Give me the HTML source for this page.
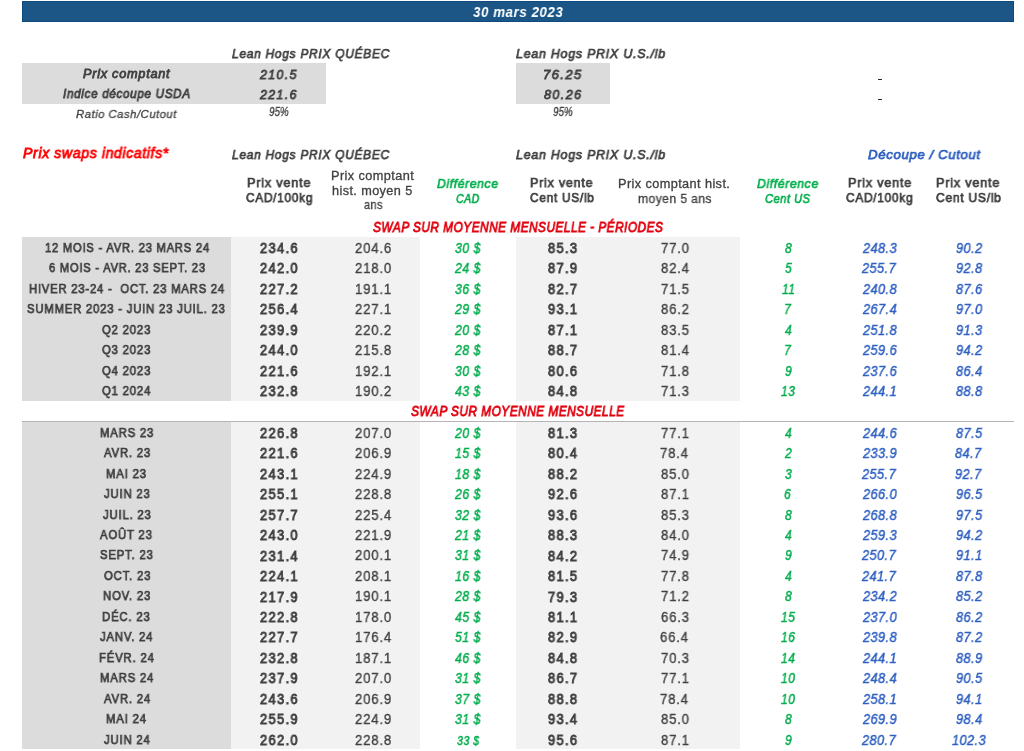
<!DOCTYPE html>
<html><head><meta charset="utf-8"><title>Swaps</title><style>
html,body{margin:0;padding:0;background:#fff;}
body{width:1024px;height:751px;position:relative;overflow:hidden;font-family:'Liberation Sans', sans-serif;}
.r{position:absolute;}
.t{position:absolute;white-space:pre;line-height:40px;transform-origin:0 0;will-change:transform;}
</style></head><body>
<div class="r" style="left:22px;top:1px;width:992px;height:21px;background:#1b5687;box-shadow:inset 0 0 0 1px #0d4a80"></div>
<div class="r" style="left:22px;top:63px;width:304px;height:41px;background:#dcdcdc"></div>
<div class="r" style="left:516px;top:63px;width:94px;height:41px;background:#dcdcdc"></div>
<div class="r" style="left:877.6px;top:78.6px;width:4px;height:1.4px;background:#222"></div>
<div class="r" style="left:877.6px;top:98.9px;width:4px;height:1.4px;background:#222"></div>
<div class="r" style="left:22px;top:237px;width:209px;height:163.6px;background:#dcdcdc"></div>
<div class="r" style="left:231px;top:237px;width:189px;height:163.6px;background:#f2f2f2"></div>
<div class="r" style="left:516px;top:237px;width:224px;height:163.6px;background:#f2f2f2"></div>
<div class="r" style="left:22px;top:421px;width:992px;height:1px;background:#b4b4b4"></div>
<div class="r" style="left:22px;top:422px;width:209px;height:327px;background:#dcdcdc"></div>
<div class="r" style="left:231px;top:422px;width:189px;height:327px;background:#f2f2f2"></div>
<div class="r" style="left:516px;top:422px;width:224px;height:327px;background:#f2f2f2"></div>
<div class="t" style="left:472.61px;top:-8.00px;font-size:15px;font-weight:bold;font-style:italic;letter-spacing:0.6px;color:#ffffff;transform:scaleX(0.8910)">30 mars 2023</div>
<div class="t" style="left:232.30px;top:34.00px;font-size:13.2px;font-weight:normal;font-style:italic;letter-spacing:0.8px;-webkit-text-stroke:0.75px #404040;color:#404040;transform:scaleX(0.9063)">Lean Hogs PRIX QUÉBEC</div>
<div class="t" style="left:516.20px;top:34.00px;font-size:13.2px;font-weight:normal;font-style:italic;letter-spacing:0.8px;-webkit-text-stroke:0.75px #404040;color:#404040;transform:scaleX(0.9418)">Lean Hogs PRIX U.S./lb</div>
<div class="t" style="left:83.00px;top:54.06px;font-size:12.4px;font-weight:normal;font-style:italic;letter-spacing:0.7px;-webkit-text-stroke:0.8px #404040;color:#404040;transform:scaleX(1.0294)">Prix comptant</div>
<div class="t" style="left:63.40px;top:74.30px;font-size:12.4px;font-weight:normal;font-style:italic;letter-spacing:0.7px;-webkit-text-stroke:0.8px #404040;color:#404040;transform:scaleX(0.9448)">Indice découpe USDA</div>
<div class="t" style="left:76.30px;top:93.80px;font-size:11.5px;font-weight:normal;font-style:italic;letter-spacing:0.5px;-webkit-text-stroke:0.3px #404040;color:#404040;transform:scaleX(0.9843)">Ratio Cash/Cutout</div>
<div class="t" style="left:260.20px;top:54.60px;font-size:13.3px;font-weight:normal;font-style:italic;letter-spacing:1.4px;-webkit-text-stroke:0.8px #404040;color:#404040;transform:scaleX(0.9359)">210.5</div>
<div class="t" style="left:260.20px;top:75.00px;font-size:13.3px;font-weight:normal;font-style:italic;letter-spacing:1.4px;-webkit-text-stroke:0.8px #404040;color:#404040;transform:scaleX(0.9359)">221.6</div>
<div class="t" style="left:269.20px;top:92.00px;font-size:12px;font-weight:normal;font-style:italic;-webkit-text-stroke:0.3px #404040;color:#404040;transform:scaleX(0.8208)">95%</div>
<div class="t" style="left:542.92px;top:54.70px;font-size:13.3px;font-weight:normal;font-style:italic;letter-spacing:1.4px;-webkit-text-stroke:0.8px #404040;color:#404040;transform:scaleX(0.9816)">76.25</div>
<div class="t" style="left:543.60px;top:74.90px;font-size:13.3px;font-weight:normal;font-style:italic;letter-spacing:1.4px;-webkit-text-stroke:0.8px #404040;color:#404040;transform:scaleX(0.9538)">80.26</div>
<div class="t" style="left:552.70px;top:91.90px;font-size:12px;font-weight:normal;font-style:italic;-webkit-text-stroke:0.3px #404040;color:#404040;transform:scaleX(0.8208)">95%</div>
<div class="t" style="left:23.20px;top:132.90px;font-size:14.2px;font-weight:normal;font-style:italic;letter-spacing:0.6px;-webkit-text-stroke:0.8px #ff0000;color:#ff0000;transform:scaleX(0.9959)">Prix swaps indicatifs*</div>
<div class="t" style="left:232.40px;top:134.90px;font-size:13.2px;font-weight:normal;font-style:italic;letter-spacing:0.8px;-webkit-text-stroke:0.75px #404040;color:#404040;transform:scaleX(0.9057)">Lean Hogs PRIX QUÉBEC</div>
<div class="t" style="left:516.20px;top:134.90px;font-size:13.2px;font-weight:normal;font-style:italic;letter-spacing:0.8px;-webkit-text-stroke:0.75px #404040;color:#404040;transform:scaleX(0.9418)">Lean Hogs PRIX U.S./lb</div>
<div class="t" style="left:868.00px;top:134.60px;font-size:13.3px;font-weight:normal;font-style:italic;letter-spacing:0.6px;-webkit-text-stroke:0.75px #2e5fc1;color:#2e5fc1;transform:scaleX(0.9965)">Découpe / Cutout</div>
<div class="t" style="left:246.52px;top:162.90px;font-size:13px;font-weight:normal;font-style:normal;letter-spacing:0.8px;-webkit-text-stroke:0.75px #404040;color:#404040;transform:scaleX(0.9766)">Prix vente</div>
<div class="t" style="left:245.50px;top:177.50px;font-size:13px;font-weight:normal;font-style:normal;letter-spacing:0.8px;-webkit-text-stroke:0.75px #404040;color:#404040;transform:scaleX(0.9110)">CAD/100kg</div>
<div class="t" style="left:330.98px;top:156.00px;font-size:12.5px;font-weight:normal;font-style:normal;letter-spacing:0.4px;-webkit-text-stroke:0.3px #404040;color:#404040;transform:scaleX(1.0188)">Prix comptant</div>
<div class="t" style="left:332.39px;top:171.00px;font-size:12.5px;font-weight:normal;font-style:normal;letter-spacing:0.4px;-webkit-text-stroke:0.3px #404040;color:#404040;transform:scaleX(1.0141)">hist. moyen 5</div>
<div class="t" style="left:363.70px;top:185.30px;font-size:12.5px;font-weight:normal;font-style:normal;letter-spacing:0.4px;-webkit-text-stroke:0.3px #404040;color:#404040;transform:scaleX(0.8810)">ans</div>
<div class="t" style="left:437.20px;top:163.90px;font-size:13px;font-weight:normal;font-style:italic;letter-spacing:0.6px;-webkit-text-stroke:0.65px #00ad4c;color:#00ad4c;transform:scaleX(0.9431)">Différence</div>
<div class="t" style="left:456.10px;top:178.50px;font-size:13px;font-weight:normal;font-style:italic;letter-spacing:0.6px;-webkit-text-stroke:0.65px #00ad4c;color:#00ad4c;transform:scaleX(0.8103)">CAD</div>
<div class="t" style="left:530.34px;top:162.90px;font-size:13px;font-weight:normal;font-style:normal;letter-spacing:0.8px;-webkit-text-stroke:0.75px #404040;color:#404040;transform:scaleX(0.9625)">Prix vente</div>
<div class="t" style="left:530.40px;top:177.50px;font-size:13px;font-weight:normal;font-style:normal;letter-spacing:0.8px;-webkit-text-stroke:0.75px #404040;color:#404040;transform:scaleX(0.9114)">Cent US/lb</div>
<div class="t" style="left:618.48px;top:163.90px;font-size:12.5px;font-weight:normal;font-style:normal;letter-spacing:0.4px;-webkit-text-stroke:0.3px #404040;color:#404040;transform:scaleX(1.0167)">Prix comptant hist.</div>
<div class="t" style="left:638.03px;top:178.50px;font-size:12.5px;font-weight:normal;font-style:normal;letter-spacing:0.4px;-webkit-text-stroke:0.3px #404040;color:#404040;transform:scaleX(0.9730)">moyen 5 ans</div>
<div class="t" style="left:757.00px;top:163.90px;font-size:13px;font-weight:normal;font-style:italic;letter-spacing:0.6px;-webkit-text-stroke:0.65px #00ad4c;color:#00ad4c;transform:scaleX(0.9462)">Différence</div>
<div class="t" style="left:765.20px;top:178.50px;font-size:13px;font-weight:normal;font-style:italic;letter-spacing:0.6px;-webkit-text-stroke:0.65px #00ad4c;color:#00ad4c;transform:scaleX(0.8547)">Cent US</div>
<div class="t" style="left:847.63px;top:162.90px;font-size:13px;font-weight:normal;font-style:normal;letter-spacing:0.8px;-webkit-text-stroke:0.75px #404040;color:#404040;transform:scaleX(0.9734)">Prix vente</div>
<div class="t" style="left:846.10px;top:177.50px;font-size:13px;font-weight:normal;font-style:normal;letter-spacing:0.8px;-webkit-text-stroke:0.75px #404040;color:#404040;transform:scaleX(0.9137)">CAD/100kg</div>
<div class="t" style="left:936.42px;top:162.90px;font-size:13px;font-weight:normal;font-style:normal;letter-spacing:0.8px;-webkit-text-stroke:0.75px #404040;color:#404040;transform:scaleX(0.9750)">Prix vente</div>
<div class="t" style="left:936.30px;top:177.50px;font-size:13px;font-weight:normal;font-style:normal;letter-spacing:0.8px;-webkit-text-stroke:0.75px #404040;color:#404040;transform:scaleX(0.9257)">Cent US/lb</div>
<div class="t" style="left:373.20px;top:206.60px;font-size:14px;font-weight:normal;font-style:italic;letter-spacing:0.5px;-webkit-text-stroke:0.8px #e0000f;color:#e0000f;transform:scaleX(0.8524)">SWAP SUR MOYENNE MENSUELLE - PÉRIODES</div>
<div class="t" style="left:411.25px;top:390.90px;font-size:14px;font-weight:normal;font-style:italic;letter-spacing:0.5px;-webkit-text-stroke:0.8px #e0000f;color:#e0000f;transform:scaleX(0.8530)">SWAP SUR MOYENNE MENSUELLE</div>
<div class="t" style="left:44.73px;top:227.80px;font-size:12.8px;font-weight:normal;font-style:normal;letter-spacing:0.9px;-webkit-text-stroke:0.75px #404040;color:#404040;transform:scaleX(0.8738)">12 MOIS - AVR. 23 MARS 24</div>
<div class="t" style="left:259.71px;top:227.90px;font-size:13.9px;font-weight:normal;font-style:normal;letter-spacing:1.5px;-webkit-text-stroke:0.9px #404040;color:#404040;transform:scaleX(0.9214)">234.6</div>
<div class="t" style="left:354.55px;top:227.80px;font-size:13.9px;font-weight:normal;font-style:normal;letter-spacing:0.9px;-webkit-text-stroke:0.35px #404040;color:#404040;transform:scaleX(0.9412)">204.6</div>
<div class="t" style="left:455.10px;top:227.80px;font-size:14px;font-weight:normal;font-style:italic;letter-spacing:0.5px;-webkit-text-stroke:0.45px #00ad4c;color:#00ad4c;transform:scaleX(0.8828)">30 $</div>
<div class="t" style="left:548.02px;top:227.90px;font-size:13.9px;font-weight:normal;font-style:normal;letter-spacing:1.5px;-webkit-text-stroke:0.9px #404040;color:#404040;transform:scaleX(0.9214)">85.3</div>
<div class="t" style="left:660.88px;top:227.80px;font-size:13.9px;font-weight:normal;font-style:normal;letter-spacing:0.9px;-webkit-text-stroke:0.35px #404040;color:#404040;transform:scaleX(0.9412)">77.0</div>
<div class="t" style="left:784.54px;top:227.80px;font-size:14px;font-weight:normal;font-style:italic;letter-spacing:0.5px;-webkit-text-stroke:0.45px #00ad4c;color:#00ad4c;transform:scaleX(0.8652)">8</div>
<div class="t" style="left:862.68px;top:227.80px;font-size:14px;font-weight:normal;font-style:italic;letter-spacing:0.5px;-webkit-text-stroke:0.45px #2e5fc1;color:#2e5fc1;transform:scaleX(0.9091)">248.3</div>
<div class="t" style="left:955.62px;top:227.80px;font-size:14px;font-weight:normal;font-style:italic;letter-spacing:0.5px;-webkit-text-stroke:0.45px #2e5fc1;color:#2e5fc1;transform:scaleX(0.9091)">90.2</div>
<div class="t" style="left:49.00px;top:248.27px;font-size:12.8px;font-weight:normal;font-style:normal;letter-spacing:0.9px;-webkit-text-stroke:0.75px #404040;color:#404040;transform:scaleX(0.8704)">6 MOIS - AVR. 23 SEPT. 23</div>
<div class="t" style="left:259.71px;top:248.37px;font-size:13.9px;font-weight:normal;font-style:normal;letter-spacing:1.5px;-webkit-text-stroke:0.9px #404040;color:#404040;transform:scaleX(0.9214)">242.0</div>
<div class="t" style="left:354.55px;top:248.27px;font-size:13.9px;font-weight:normal;font-style:normal;letter-spacing:0.9px;-webkit-text-stroke:0.35px #404040;color:#404040;transform:scaleX(0.9412)">218.0</div>
<div class="t" style="left:455.10px;top:248.27px;font-size:14px;font-weight:normal;font-style:italic;letter-spacing:0.5px;-webkit-text-stroke:0.45px #00ad4c;color:#00ad4c;transform:scaleX(0.8828)">24 $</div>
<div class="t" style="left:548.02px;top:248.37px;font-size:13.9px;font-weight:normal;font-style:normal;letter-spacing:1.5px;-webkit-text-stroke:0.9px #404040;color:#404040;transform:scaleX(0.9214)">87.9</div>
<div class="t" style="left:660.88px;top:248.27px;font-size:13.9px;font-weight:normal;font-style:normal;letter-spacing:0.9px;-webkit-text-stroke:0.35px #404040;color:#404040;transform:scaleX(0.9412)">82.4</div>
<div class="t" style="left:784.54px;top:248.27px;font-size:14px;font-weight:normal;font-style:italic;letter-spacing:0.5px;-webkit-text-stroke:0.45px #00ad4c;color:#00ad4c;transform:scaleX(0.8652)">5</div>
<div class="t" style="left:862.23px;top:248.27px;font-size:14px;font-weight:normal;font-style:italic;letter-spacing:0.5px;-webkit-text-stroke:0.45px #2e5fc1;color:#2e5fc1;transform:scaleX(0.9091)">255.7</div>
<div class="t" style="left:955.62px;top:248.27px;font-size:14px;font-weight:normal;font-style:italic;letter-spacing:0.5px;-webkit-text-stroke:0.45px #2e5fc1;color:#2e5fc1;transform:scaleX(0.9091)">92.8</div>
<div class="t" style="left:28.52px;top:268.74px;font-size:12.8px;font-weight:normal;font-style:normal;letter-spacing:0.9px;-webkit-text-stroke:0.75px #404040;color:#404040;transform:scaleX(0.8805)">HIVER 23-24 -  OCT. 23 MARS 24</div>
<div class="t" style="left:259.71px;top:268.84px;font-size:13.9px;font-weight:normal;font-style:normal;letter-spacing:1.5px;-webkit-text-stroke:0.9px #404040;color:#404040;transform:scaleX(0.9214)">227.2</div>
<div class="t" style="left:354.55px;top:268.74px;font-size:13.9px;font-weight:normal;font-style:normal;letter-spacing:0.9px;-webkit-text-stroke:0.35px #404040;color:#404040;transform:scaleX(0.9412)">191.1</div>
<div class="t" style="left:455.10px;top:268.74px;font-size:14px;font-weight:normal;font-style:italic;letter-spacing:0.5px;-webkit-text-stroke:0.45px #00ad4c;color:#00ad4c;transform:scaleX(0.8828)">36 $</div>
<div class="t" style="left:548.02px;top:268.84px;font-size:13.9px;font-weight:normal;font-style:normal;letter-spacing:1.5px;-webkit-text-stroke:0.9px #404040;color:#404040;transform:scaleX(0.9214)">82.7</div>
<div class="t" style="left:660.88px;top:268.74px;font-size:13.9px;font-weight:normal;font-style:normal;letter-spacing:0.9px;-webkit-text-stroke:0.35px #404040;color:#404040;transform:scaleX(0.9412)">71.5</div>
<div class="t" style="left:781.94px;top:268.74px;font-size:14px;font-weight:normal;font-style:italic;letter-spacing:0.5px;-webkit-text-stroke:0.45px #00ad4c;color:#00ad4c;transform:scaleX(0.8652)">11</div>
<div class="t" style="left:862.68px;top:268.74px;font-size:14px;font-weight:normal;font-style:italic;letter-spacing:0.5px;-webkit-text-stroke:0.45px #2e5fc1;color:#2e5fc1;transform:scaleX(0.9091)">240.8</div>
<div class="t" style="left:955.62px;top:268.74px;font-size:14px;font-weight:normal;font-style:italic;letter-spacing:0.5px;-webkit-text-stroke:0.45px #2e5fc1;color:#2e5fc1;transform:scaleX(0.9091)">87.6</div>
<div class="t" style="left:27.30px;top:289.21px;font-size:12.8px;font-weight:normal;font-style:normal;letter-spacing:0.9px;-webkit-text-stroke:0.75px #404040;color:#404040;transform:scaleX(0.8839)">SUMMER 2023 - JUIN 23 JUIL. 23</div>
<div class="t" style="left:259.71px;top:289.31px;font-size:13.9px;font-weight:normal;font-style:normal;letter-spacing:1.5px;-webkit-text-stroke:0.9px #404040;color:#404040;transform:scaleX(0.9214)">256.4</div>
<div class="t" style="left:354.55px;top:289.21px;font-size:13.9px;font-weight:normal;font-style:normal;letter-spacing:0.9px;-webkit-text-stroke:0.35px #404040;color:#404040;transform:scaleX(0.9412)">227.1</div>
<div class="t" style="left:455.10px;top:289.21px;font-size:14px;font-weight:normal;font-style:italic;letter-spacing:0.5px;-webkit-text-stroke:0.45px #00ad4c;color:#00ad4c;transform:scaleX(0.8828)">29 $</div>
<div class="t" style="left:548.02px;top:289.31px;font-size:13.9px;font-weight:normal;font-style:normal;letter-spacing:1.5px;-webkit-text-stroke:0.9px #404040;color:#404040;transform:scaleX(0.9214)">93.1</div>
<div class="t" style="left:661.35px;top:289.21px;font-size:13.9px;font-weight:normal;font-style:normal;letter-spacing:0.9px;-webkit-text-stroke:0.35px #404040;color:#404040;transform:scaleX(0.9412)">86.2</div>
<div class="t" style="left:783.67px;top:289.21px;font-size:14px;font-weight:normal;font-style:italic;letter-spacing:0.5px;-webkit-text-stroke:0.45px #00ad4c;color:#00ad4c;transform:scaleX(0.8652)">7</div>
<div class="t" style="left:862.68px;top:289.21px;font-size:14px;font-weight:normal;font-style:italic;letter-spacing:0.5px;-webkit-text-stroke:0.45px #2e5fc1;color:#2e5fc1;transform:scaleX(0.9091)">267.4</div>
<div class="t" style="left:955.62px;top:289.21px;font-size:14px;font-weight:normal;font-style:italic;letter-spacing:0.5px;-webkit-text-stroke:0.45px #2e5fc1;color:#2e5fc1;transform:scaleX(0.9091)">97.0</div>
<div class="t" style="left:102.21px;top:309.68px;font-size:12.8px;font-weight:normal;font-style:normal;letter-spacing:0.9px;-webkit-text-stroke:0.75px #404040;color:#404040;transform:scaleX(0.8869)">Q2 2023</div>
<div class="t" style="left:259.71px;top:309.78px;font-size:13.9px;font-weight:normal;font-style:normal;letter-spacing:1.5px;-webkit-text-stroke:0.9px #404040;color:#404040;transform:scaleX(0.9214)">239.9</div>
<div class="t" style="left:354.55px;top:309.68px;font-size:13.9px;font-weight:normal;font-style:normal;letter-spacing:0.9px;-webkit-text-stroke:0.35px #404040;color:#404040;transform:scaleX(0.9412)">220.2</div>
<div class="t" style="left:455.10px;top:309.68px;font-size:14px;font-weight:normal;font-style:italic;letter-spacing:0.5px;-webkit-text-stroke:0.45px #00ad4c;color:#00ad4c;transform:scaleX(0.8828)">20 $</div>
<div class="t" style="left:548.02px;top:309.78px;font-size:13.9px;font-weight:normal;font-style:normal;letter-spacing:1.5px;-webkit-text-stroke:0.9px #404040;color:#404040;transform:scaleX(0.9214)">87.1</div>
<div class="t" style="left:661.35px;top:309.68px;font-size:13.9px;font-weight:normal;font-style:normal;letter-spacing:0.9px;-webkit-text-stroke:0.35px #404040;color:#404040;transform:scaleX(0.9412)">83.5</div>
<div class="t" style="left:784.54px;top:309.68px;font-size:14px;font-weight:normal;font-style:italic;letter-spacing:0.5px;-webkit-text-stroke:0.45px #00ad4c;color:#00ad4c;transform:scaleX(0.8652)">4</div>
<div class="t" style="left:862.68px;top:309.68px;font-size:14px;font-weight:normal;font-style:italic;letter-spacing:0.5px;-webkit-text-stroke:0.45px #2e5fc1;color:#2e5fc1;transform:scaleX(0.9091)">251.8</div>
<div class="t" style="left:955.62px;top:309.68px;font-size:14px;font-weight:normal;font-style:italic;letter-spacing:0.5px;-webkit-text-stroke:0.45px #2e5fc1;color:#2e5fc1;transform:scaleX(0.9091)">91.3</div>
<div class="t" style="left:102.21px;top:330.15px;font-size:12.8px;font-weight:normal;font-style:normal;letter-spacing:0.9px;-webkit-text-stroke:0.75px #404040;color:#404040;transform:scaleX(0.8869)">Q3 2023</div>
<div class="t" style="left:259.71px;top:330.25px;font-size:13.9px;font-weight:normal;font-style:normal;letter-spacing:1.5px;-webkit-text-stroke:0.9px #404040;color:#404040;transform:scaleX(0.9214)">244.0</div>
<div class="t" style="left:354.55px;top:330.15px;font-size:13.9px;font-weight:normal;font-style:normal;letter-spacing:0.9px;-webkit-text-stroke:0.35px #404040;color:#404040;transform:scaleX(0.9412)">215.8</div>
<div class="t" style="left:455.10px;top:330.15px;font-size:14px;font-weight:normal;font-style:italic;letter-spacing:0.5px;-webkit-text-stroke:0.45px #00ad4c;color:#00ad4c;transform:scaleX(0.8828)">28 $</div>
<div class="t" style="left:548.02px;top:330.25px;font-size:13.9px;font-weight:normal;font-style:normal;letter-spacing:1.5px;-webkit-text-stroke:0.9px #404040;color:#404040;transform:scaleX(0.9214)">88.7</div>
<div class="t" style="left:660.88px;top:330.15px;font-size:13.9px;font-weight:normal;font-style:normal;letter-spacing:0.9px;-webkit-text-stroke:0.35px #404040;color:#404040;transform:scaleX(0.9412)">81.4</div>
<div class="t" style="left:783.67px;top:330.15px;font-size:14px;font-weight:normal;font-style:italic;letter-spacing:0.5px;-webkit-text-stroke:0.45px #00ad4c;color:#00ad4c;transform:scaleX(0.8652)">7</div>
<div class="t" style="left:862.68px;top:330.15px;font-size:14px;font-weight:normal;font-style:italic;letter-spacing:0.5px;-webkit-text-stroke:0.45px #2e5fc1;color:#2e5fc1;transform:scaleX(0.9091)">259.6</div>
<div class="t" style="left:955.62px;top:330.15px;font-size:14px;font-weight:normal;font-style:italic;letter-spacing:0.5px;-webkit-text-stroke:0.45px #2e5fc1;color:#2e5fc1;transform:scaleX(0.9091)">94.2</div>
<div class="t" style="left:102.21px;top:350.62px;font-size:12.8px;font-weight:normal;font-style:normal;letter-spacing:0.9px;-webkit-text-stroke:0.75px #404040;color:#404040;transform:scaleX(0.8869)">Q4 2023</div>
<div class="t" style="left:259.71px;top:350.72px;font-size:13.9px;font-weight:normal;font-style:normal;letter-spacing:1.5px;-webkit-text-stroke:0.9px #404040;color:#404040;transform:scaleX(0.9214)">221.6</div>
<div class="t" style="left:354.55px;top:350.62px;font-size:13.9px;font-weight:normal;font-style:normal;letter-spacing:0.9px;-webkit-text-stroke:0.35px #404040;color:#404040;transform:scaleX(0.9412)">192.1</div>
<div class="t" style="left:455.10px;top:350.62px;font-size:14px;font-weight:normal;font-style:italic;letter-spacing:0.5px;-webkit-text-stroke:0.45px #00ad4c;color:#00ad4c;transform:scaleX(0.8828)">30 $</div>
<div class="t" style="left:548.02px;top:350.72px;font-size:13.9px;font-weight:normal;font-style:normal;letter-spacing:1.5px;-webkit-text-stroke:0.9px #404040;color:#404040;transform:scaleX(0.9214)">80.6</div>
<div class="t" style="left:660.88px;top:350.62px;font-size:13.9px;font-weight:normal;font-style:normal;letter-spacing:0.9px;-webkit-text-stroke:0.35px #404040;color:#404040;transform:scaleX(0.9412)">71.8</div>
<div class="t" style="left:784.54px;top:350.62px;font-size:14px;font-weight:normal;font-style:italic;letter-spacing:0.5px;-webkit-text-stroke:0.45px #00ad4c;color:#00ad4c;transform:scaleX(0.8652)">9</div>
<div class="t" style="left:862.68px;top:350.62px;font-size:14px;font-weight:normal;font-style:italic;letter-spacing:0.5px;-webkit-text-stroke:0.45px #2e5fc1;color:#2e5fc1;transform:scaleX(0.9091)">237.6</div>
<div class="t" style="left:955.62px;top:350.62px;font-size:14px;font-weight:normal;font-style:italic;letter-spacing:0.5px;-webkit-text-stroke:0.45px #2e5fc1;color:#2e5fc1;transform:scaleX(0.9091)">86.4</div>
<div class="t" style="left:102.21px;top:371.09px;font-size:12.8px;font-weight:normal;font-style:normal;letter-spacing:0.9px;-webkit-text-stroke:0.75px #404040;color:#404040;transform:scaleX(0.8869)">Q1 2024</div>
<div class="t" style="left:259.71px;top:371.19px;font-size:13.9px;font-weight:normal;font-style:normal;letter-spacing:1.5px;-webkit-text-stroke:0.9px #404040;color:#404040;transform:scaleX(0.9214)">232.8</div>
<div class="t" style="left:354.55px;top:371.09px;font-size:13.9px;font-weight:normal;font-style:normal;letter-spacing:0.9px;-webkit-text-stroke:0.35px #404040;color:#404040;transform:scaleX(0.9412)">190.2</div>
<div class="t" style="left:455.10px;top:371.09px;font-size:14px;font-weight:normal;font-style:italic;letter-spacing:0.5px;-webkit-text-stroke:0.45px #00ad4c;color:#00ad4c;transform:scaleX(0.8828)">43 $</div>
<div class="t" style="left:548.02px;top:371.19px;font-size:13.9px;font-weight:normal;font-style:normal;letter-spacing:1.5px;-webkit-text-stroke:0.9px #404040;color:#404040;transform:scaleX(0.9214)">84.8</div>
<div class="t" style="left:660.88px;top:371.09px;font-size:13.9px;font-weight:normal;font-style:normal;letter-spacing:0.9px;-webkit-text-stroke:0.35px #404040;color:#404040;transform:scaleX(0.9412)">71.3</div>
<div class="t" style="left:781.08px;top:371.09px;font-size:14px;font-weight:normal;font-style:italic;letter-spacing:0.5px;-webkit-text-stroke:0.45px #00ad4c;color:#00ad4c;transform:scaleX(0.8652)">13</div>
<div class="t" style="left:863.14px;top:371.09px;font-size:14px;font-weight:normal;font-style:italic;letter-spacing:0.5px;-webkit-text-stroke:0.45px #2e5fc1;color:#2e5fc1;transform:scaleX(0.9091)">244.1</div>
<div class="t" style="left:955.62px;top:371.09px;font-size:14px;font-weight:normal;font-style:italic;letter-spacing:0.5px;-webkit-text-stroke:0.45px #2e5fc1;color:#2e5fc1;transform:scaleX(0.9091)">88.8</div>
<div class="t" style="left:99.55px;top:412.65px;font-size:12.8px;font-weight:normal;font-style:normal;letter-spacing:0.9px;-webkit-text-stroke:0.75px #404040;color:#404040;transform:scaleX(0.8869)">MARS 23</div>
<div class="t" style="left:259.71px;top:412.75px;font-size:13.9px;font-weight:normal;font-style:normal;letter-spacing:1.5px;-webkit-text-stroke:0.9px #404040;color:#404040;transform:scaleX(0.9214)">226.8</div>
<div class="t" style="left:354.55px;top:412.65px;font-size:13.9px;font-weight:normal;font-style:normal;letter-spacing:0.9px;-webkit-text-stroke:0.35px #404040;color:#404040;transform:scaleX(0.9412)">207.0</div>
<div class="t" style="left:455.10px;top:412.65px;font-size:14px;font-weight:normal;font-style:italic;letter-spacing:0.5px;-webkit-text-stroke:0.45px #00ad4c;color:#00ad4c;transform:scaleX(0.8828)">20 $</div>
<div class="t" style="left:548.02px;top:412.75px;font-size:13.9px;font-weight:normal;font-style:normal;letter-spacing:1.5px;-webkit-text-stroke:0.9px #404040;color:#404040;transform:scaleX(0.9214)">81.3</div>
<div class="t" style="left:660.88px;top:412.65px;font-size:13.9px;font-weight:normal;font-style:normal;letter-spacing:0.9px;-webkit-text-stroke:0.35px #404040;color:#404040;transform:scaleX(0.9412)">77.1</div>
<div class="t" style="left:784.54px;top:412.65px;font-size:14px;font-weight:normal;font-style:italic;letter-spacing:0.5px;-webkit-text-stroke:0.45px #00ad4c;color:#00ad4c;transform:scaleX(0.8652)">4</div>
<div class="t" style="left:862.68px;top:412.65px;font-size:14px;font-weight:normal;font-style:italic;letter-spacing:0.5px;-webkit-text-stroke:0.45px #2e5fc1;color:#2e5fc1;transform:scaleX(0.9091)">244.6</div>
<div class="t" style="left:955.62px;top:412.65px;font-size:14px;font-weight:normal;font-style:italic;letter-spacing:0.5px;-webkit-text-stroke:0.45px #2e5fc1;color:#2e5fc1;transform:scaleX(0.9091)">87.5</div>
<div class="t" style="left:103.54px;top:433.12px;font-size:12.8px;font-weight:normal;font-style:normal;letter-spacing:0.9px;-webkit-text-stroke:0.75px #404040;color:#404040;transform:scaleX(0.8869)">AVR. 23</div>
<div class="t" style="left:259.71px;top:433.22px;font-size:13.9px;font-weight:normal;font-style:normal;letter-spacing:1.5px;-webkit-text-stroke:0.9px #404040;color:#404040;transform:scaleX(0.9214)">221.6</div>
<div class="t" style="left:354.55px;top:433.12px;font-size:13.9px;font-weight:normal;font-style:normal;letter-spacing:0.9px;-webkit-text-stroke:0.35px #404040;color:#404040;transform:scaleX(0.9412)">206.9</div>
<div class="t" style="left:455.10px;top:433.12px;font-size:14px;font-weight:normal;font-style:italic;letter-spacing:0.5px;-webkit-text-stroke:0.45px #00ad4c;color:#00ad4c;transform:scaleX(0.8828)">15 $</div>
<div class="t" style="left:547.56px;top:433.22px;font-size:13.9px;font-weight:normal;font-style:normal;letter-spacing:1.5px;-webkit-text-stroke:0.9px #404040;color:#404040;transform:scaleX(0.9214)">80.4</div>
<div class="t" style="left:660.41px;top:433.12px;font-size:13.9px;font-weight:normal;font-style:normal;letter-spacing:0.9px;-webkit-text-stroke:0.35px #404040;color:#404040;transform:scaleX(0.9412)">78.4</div>
<div class="t" style="left:784.54px;top:433.12px;font-size:14px;font-weight:normal;font-style:italic;letter-spacing:0.5px;-webkit-text-stroke:0.45px #00ad4c;color:#00ad4c;transform:scaleX(0.8652)">2</div>
<div class="t" style="left:862.68px;top:433.12px;font-size:14px;font-weight:normal;font-style:italic;letter-spacing:0.5px;-webkit-text-stroke:0.45px #2e5fc1;color:#2e5fc1;transform:scaleX(0.9091)">233.9</div>
<div class="t" style="left:955.16px;top:433.12px;font-size:14px;font-weight:normal;font-style:italic;letter-spacing:0.5px;-webkit-text-stroke:0.45px #2e5fc1;color:#2e5fc1;transform:scaleX(0.9091)">84.7</div>
<div class="t" style="left:106.20px;top:453.59px;font-size:12.8px;font-weight:normal;font-style:normal;letter-spacing:0.9px;-webkit-text-stroke:0.75px #404040;color:#404040;transform:scaleX(0.8869)">MAI 23</div>
<div class="t" style="left:259.71px;top:453.69px;font-size:13.9px;font-weight:normal;font-style:normal;letter-spacing:1.5px;-webkit-text-stroke:0.9px #404040;color:#404040;transform:scaleX(0.9214)">243.1</div>
<div class="t" style="left:354.55px;top:453.59px;font-size:13.9px;font-weight:normal;font-style:normal;letter-spacing:0.9px;-webkit-text-stroke:0.35px #404040;color:#404040;transform:scaleX(0.9412)">224.9</div>
<div class="t" style="left:455.10px;top:453.59px;font-size:14px;font-weight:normal;font-style:italic;letter-spacing:0.5px;-webkit-text-stroke:0.45px #00ad4c;color:#00ad4c;transform:scaleX(0.8828)">18 $</div>
<div class="t" style="left:548.02px;top:453.69px;font-size:13.9px;font-weight:normal;font-style:normal;letter-spacing:1.5px;-webkit-text-stroke:0.9px #404040;color:#404040;transform:scaleX(0.9214)">88.2</div>
<div class="t" style="left:661.35px;top:453.59px;font-size:13.9px;font-weight:normal;font-style:normal;letter-spacing:0.9px;-webkit-text-stroke:0.35px #404040;color:#404040;transform:scaleX(0.9412)">85.0</div>
<div class="t" style="left:784.54px;top:453.59px;font-size:14px;font-weight:normal;font-style:italic;letter-spacing:0.5px;-webkit-text-stroke:0.45px #00ad4c;color:#00ad4c;transform:scaleX(0.8652)">3</div>
<div class="t" style="left:862.23px;top:453.59px;font-size:14px;font-weight:normal;font-style:italic;letter-spacing:0.5px;-webkit-text-stroke:0.45px #2e5fc1;color:#2e5fc1;transform:scaleX(0.9091)">255.7</div>
<div class="t" style="left:955.16px;top:453.59px;font-size:14px;font-weight:normal;font-style:italic;letter-spacing:0.5px;-webkit-text-stroke:0.45px #2e5fc1;color:#2e5fc1;transform:scaleX(0.9091)">92.7</div>
<div class="t" style="left:103.54px;top:474.06px;font-size:12.8px;font-weight:normal;font-style:normal;letter-spacing:0.9px;-webkit-text-stroke:0.75px #404040;color:#404040;transform:scaleX(0.8869)">JUIN 23</div>
<div class="t" style="left:259.71px;top:474.16px;font-size:13.9px;font-weight:normal;font-style:normal;letter-spacing:1.5px;-webkit-text-stroke:0.9px #404040;color:#404040;transform:scaleX(0.9214)">255.1</div>
<div class="t" style="left:354.55px;top:474.06px;font-size:13.9px;font-weight:normal;font-style:normal;letter-spacing:0.9px;-webkit-text-stroke:0.35px #404040;color:#404040;transform:scaleX(0.9412)">228.8</div>
<div class="t" style="left:455.10px;top:474.06px;font-size:14px;font-weight:normal;font-style:italic;letter-spacing:0.5px;-webkit-text-stroke:0.45px #00ad4c;color:#00ad4c;transform:scaleX(0.8828)">26 $</div>
<div class="t" style="left:548.02px;top:474.16px;font-size:13.9px;font-weight:normal;font-style:normal;letter-spacing:1.5px;-webkit-text-stroke:0.9px #404040;color:#404040;transform:scaleX(0.9214)">92.6</div>
<div class="t" style="left:661.35px;top:474.06px;font-size:13.9px;font-weight:normal;font-style:normal;letter-spacing:0.9px;-webkit-text-stroke:0.35px #404040;color:#404040;transform:scaleX(0.9412)">87.1</div>
<div class="t" style="left:784.11px;top:474.06px;font-size:14px;font-weight:normal;font-style:italic;letter-spacing:0.5px;-webkit-text-stroke:0.45px #00ad4c;color:#00ad4c;transform:scaleX(0.8652)">6</div>
<div class="t" style="left:862.68px;top:474.06px;font-size:14px;font-weight:normal;font-style:italic;letter-spacing:0.5px;-webkit-text-stroke:0.45px #2e5fc1;color:#2e5fc1;transform:scaleX(0.9091)">266.0</div>
<div class="t" style="left:955.62px;top:474.06px;font-size:14px;font-weight:normal;font-style:italic;letter-spacing:0.5px;-webkit-text-stroke:0.45px #2e5fc1;color:#2e5fc1;transform:scaleX(0.9091)">96.5</div>
<div class="t" style="left:102.65px;top:494.53px;font-size:12.8px;font-weight:normal;font-style:normal;letter-spacing:0.9px;-webkit-text-stroke:0.75px #404040;color:#404040;transform:scaleX(0.8869)">JUIL. 23</div>
<div class="t" style="left:259.71px;top:494.63px;font-size:13.9px;font-weight:normal;font-style:normal;letter-spacing:1.5px;-webkit-text-stroke:0.9px #404040;color:#404040;transform:scaleX(0.9214)">257.7</div>
<div class="t" style="left:354.55px;top:494.53px;font-size:13.9px;font-weight:normal;font-style:normal;letter-spacing:0.9px;-webkit-text-stroke:0.35px #404040;color:#404040;transform:scaleX(0.9412)">225.4</div>
<div class="t" style="left:455.10px;top:494.53px;font-size:14px;font-weight:normal;font-style:italic;letter-spacing:0.5px;-webkit-text-stroke:0.45px #00ad4c;color:#00ad4c;transform:scaleX(0.8828)">32 $</div>
<div class="t" style="left:548.02px;top:494.63px;font-size:13.9px;font-weight:normal;font-style:normal;letter-spacing:1.5px;-webkit-text-stroke:0.9px #404040;color:#404040;transform:scaleX(0.9214)">93.6</div>
<div class="t" style="left:661.35px;top:494.53px;font-size:13.9px;font-weight:normal;font-style:normal;letter-spacing:0.9px;-webkit-text-stroke:0.35px #404040;color:#404040;transform:scaleX(0.9412)">85.3</div>
<div class="t" style="left:784.54px;top:494.53px;font-size:14px;font-weight:normal;font-style:italic;letter-spacing:0.5px;-webkit-text-stroke:0.45px #00ad4c;color:#00ad4c;transform:scaleX(0.8652)">8</div>
<div class="t" style="left:862.68px;top:494.53px;font-size:14px;font-weight:normal;font-style:italic;letter-spacing:0.5px;-webkit-text-stroke:0.45px #2e5fc1;color:#2e5fc1;transform:scaleX(0.9091)">268.8</div>
<div class="t" style="left:955.62px;top:494.53px;font-size:14px;font-weight:normal;font-style:italic;letter-spacing:0.5px;-webkit-text-stroke:0.45px #2e5fc1;color:#2e5fc1;transform:scaleX(0.9091)">97.5</div>
<div class="t" style="left:100.44px;top:515.00px;font-size:12.8px;font-weight:normal;font-style:normal;letter-spacing:0.9px;-webkit-text-stroke:0.75px #404040;color:#404040;transform:scaleX(0.8869)">AOÛT 23</div>
<div class="t" style="left:259.71px;top:515.10px;font-size:13.9px;font-weight:normal;font-style:normal;letter-spacing:1.5px;-webkit-text-stroke:0.9px #404040;color:#404040;transform:scaleX(0.9214)">243.0</div>
<div class="t" style="left:354.55px;top:515.00px;font-size:13.9px;font-weight:normal;font-style:normal;letter-spacing:0.9px;-webkit-text-stroke:0.35px #404040;color:#404040;transform:scaleX(0.9412)">221.9</div>
<div class="t" style="left:455.10px;top:515.00px;font-size:14px;font-weight:normal;font-style:italic;letter-spacing:0.5px;-webkit-text-stroke:0.45px #00ad4c;color:#00ad4c;transform:scaleX(0.8828)">21 $</div>
<div class="t" style="left:548.02px;top:515.10px;font-size:13.9px;font-weight:normal;font-style:normal;letter-spacing:1.5px;-webkit-text-stroke:0.9px #404040;color:#404040;transform:scaleX(0.9214)">88.3</div>
<div class="t" style="left:661.35px;top:515.00px;font-size:13.9px;font-weight:normal;font-style:normal;letter-spacing:0.9px;-webkit-text-stroke:0.35px #404040;color:#404040;transform:scaleX(0.9412)">84.0</div>
<div class="t" style="left:784.54px;top:515.00px;font-size:14px;font-weight:normal;font-style:italic;letter-spacing:0.5px;-webkit-text-stroke:0.45px #00ad4c;color:#00ad4c;transform:scaleX(0.8652)">4</div>
<div class="t" style="left:862.68px;top:515.00px;font-size:14px;font-weight:normal;font-style:italic;letter-spacing:0.5px;-webkit-text-stroke:0.45px #2e5fc1;color:#2e5fc1;transform:scaleX(0.9091)">259.3</div>
<div class="t" style="left:955.62px;top:515.00px;font-size:14px;font-weight:normal;font-style:italic;letter-spacing:0.5px;-webkit-text-stroke:0.45px #2e5fc1;color:#2e5fc1;transform:scaleX(0.9091)">94.2</div>
<div class="t" style="left:99.99px;top:535.47px;font-size:12.8px;font-weight:normal;font-style:normal;letter-spacing:0.9px;-webkit-text-stroke:0.75px #404040;color:#404040;transform:scaleX(0.8869)">SEPT. 23</div>
<div class="t" style="left:259.71px;top:535.57px;font-size:13.9px;font-weight:normal;font-style:normal;letter-spacing:1.5px;-webkit-text-stroke:0.9px #404040;color:#404040;transform:scaleX(0.9214)">231.4</div>
<div class="t" style="left:354.55px;top:535.47px;font-size:13.9px;font-weight:normal;font-style:normal;letter-spacing:0.9px;-webkit-text-stroke:0.35px #404040;color:#404040;transform:scaleX(0.9412)">200.1</div>
<div class="t" style="left:455.10px;top:535.47px;font-size:14px;font-weight:normal;font-style:italic;letter-spacing:0.5px;-webkit-text-stroke:0.45px #00ad4c;color:#00ad4c;transform:scaleX(0.8828)">31 $</div>
<div class="t" style="left:548.02px;top:535.57px;font-size:13.9px;font-weight:normal;font-style:normal;letter-spacing:1.5px;-webkit-text-stroke:0.9px #404040;color:#404040;transform:scaleX(0.9214)">84.2</div>
<div class="t" style="left:660.88px;top:535.47px;font-size:13.9px;font-weight:normal;font-style:normal;letter-spacing:0.9px;-webkit-text-stroke:0.35px #404040;color:#404040;transform:scaleX(0.9412)">74.9</div>
<div class="t" style="left:784.54px;top:535.47px;font-size:14px;font-weight:normal;font-style:italic;letter-spacing:0.5px;-webkit-text-stroke:0.45px #00ad4c;color:#00ad4c;transform:scaleX(0.8652)">9</div>
<div class="t" style="left:862.23px;top:535.47px;font-size:14px;font-weight:normal;font-style:italic;letter-spacing:0.5px;-webkit-text-stroke:0.45px #2e5fc1;color:#2e5fc1;transform:scaleX(0.9091)">250.7</div>
<div class="t" style="left:956.07px;top:535.47px;font-size:14px;font-weight:normal;font-style:italic;letter-spacing:0.5px;-webkit-text-stroke:0.45px #2e5fc1;color:#2e5fc1;transform:scaleX(0.9091)">91.1</div>
<div class="t" style="left:103.54px;top:555.94px;font-size:12.8px;font-weight:normal;font-style:normal;letter-spacing:0.9px;-webkit-text-stroke:0.75px #404040;color:#404040;transform:scaleX(0.8869)">OCT. 23</div>
<div class="t" style="left:259.71px;top:556.04px;font-size:13.9px;font-weight:normal;font-style:normal;letter-spacing:1.5px;-webkit-text-stroke:0.9px #404040;color:#404040;transform:scaleX(0.9214)">224.1</div>
<div class="t" style="left:354.55px;top:555.94px;font-size:13.9px;font-weight:normal;font-style:normal;letter-spacing:0.9px;-webkit-text-stroke:0.35px #404040;color:#404040;transform:scaleX(0.9412)">208.1</div>
<div class="t" style="left:455.10px;top:555.94px;font-size:14px;font-weight:normal;font-style:italic;letter-spacing:0.5px;-webkit-text-stroke:0.45px #00ad4c;color:#00ad4c;transform:scaleX(0.8828)">16 $</div>
<div class="t" style="left:548.02px;top:556.04px;font-size:13.9px;font-weight:normal;font-style:normal;letter-spacing:1.5px;-webkit-text-stroke:0.9px #404040;color:#404040;transform:scaleX(0.9214)">81.5</div>
<div class="t" style="left:660.88px;top:555.94px;font-size:13.9px;font-weight:normal;font-style:normal;letter-spacing:0.9px;-webkit-text-stroke:0.35px #404040;color:#404040;transform:scaleX(0.9412)">77.8</div>
<div class="t" style="left:784.54px;top:555.94px;font-size:14px;font-weight:normal;font-style:italic;letter-spacing:0.5px;-webkit-text-stroke:0.45px #00ad4c;color:#00ad4c;transform:scaleX(0.8652)">4</div>
<div class="t" style="left:862.23px;top:555.94px;font-size:14px;font-weight:normal;font-style:italic;letter-spacing:0.5px;-webkit-text-stroke:0.45px #2e5fc1;color:#2e5fc1;transform:scaleX(0.9091)">241.7</div>
<div class="t" style="left:955.62px;top:555.94px;font-size:14px;font-weight:normal;font-style:italic;letter-spacing:0.5px;-webkit-text-stroke:0.45px #2e5fc1;color:#2e5fc1;transform:scaleX(0.9091)">87.8</div>
<div class="t" style="left:102.65px;top:576.41px;font-size:12.8px;font-weight:normal;font-style:normal;letter-spacing:0.9px;-webkit-text-stroke:0.75px #404040;color:#404040;transform:scaleX(0.8869)">NOV. 23</div>
<div class="t" style="left:259.71px;top:576.51px;font-size:13.9px;font-weight:normal;font-style:normal;letter-spacing:1.5px;-webkit-text-stroke:0.9px #404040;color:#404040;transform:scaleX(0.9214)">217.9</div>
<div class="t" style="left:354.55px;top:576.41px;font-size:13.9px;font-weight:normal;font-style:normal;letter-spacing:0.9px;-webkit-text-stroke:0.35px #404040;color:#404040;transform:scaleX(0.9412)">190.1</div>
<div class="t" style="left:455.10px;top:576.41px;font-size:14px;font-weight:normal;font-style:italic;letter-spacing:0.5px;-webkit-text-stroke:0.45px #00ad4c;color:#00ad4c;transform:scaleX(0.8828)">28 $</div>
<div class="t" style="left:548.02px;top:576.51px;font-size:13.9px;font-weight:normal;font-style:normal;letter-spacing:1.5px;-webkit-text-stroke:0.9px #404040;color:#404040;transform:scaleX(0.9214)">79.3</div>
<div class="t" style="left:660.88px;top:576.41px;font-size:13.9px;font-weight:normal;font-style:normal;letter-spacing:0.9px;-webkit-text-stroke:0.35px #404040;color:#404040;transform:scaleX(0.9412)">71.2</div>
<div class="t" style="left:784.54px;top:576.41px;font-size:14px;font-weight:normal;font-style:italic;letter-spacing:0.5px;-webkit-text-stroke:0.45px #00ad4c;color:#00ad4c;transform:scaleX(0.8652)">8</div>
<div class="t" style="left:862.68px;top:576.41px;font-size:14px;font-weight:normal;font-style:italic;letter-spacing:0.5px;-webkit-text-stroke:0.45px #2e5fc1;color:#2e5fc1;transform:scaleX(0.9091)">234.2</div>
<div class="t" style="left:955.62px;top:576.41px;font-size:14px;font-weight:normal;font-style:italic;letter-spacing:0.5px;-webkit-text-stroke:0.45px #2e5fc1;color:#2e5fc1;transform:scaleX(0.9091)">85.2</div>
<div class="t" style="left:102.21px;top:596.88px;font-size:12.8px;font-weight:normal;font-style:normal;letter-spacing:0.9px;-webkit-text-stroke:0.75px #404040;color:#404040;transform:scaleX(0.8869)">DÉC. 23</div>
<div class="t" style="left:259.71px;top:596.98px;font-size:13.9px;font-weight:normal;font-style:normal;letter-spacing:1.5px;-webkit-text-stroke:0.9px #404040;color:#404040;transform:scaleX(0.9214)">222.8</div>
<div class="t" style="left:354.55px;top:596.88px;font-size:13.9px;font-weight:normal;font-style:normal;letter-spacing:0.9px;-webkit-text-stroke:0.35px #404040;color:#404040;transform:scaleX(0.9412)">178.0</div>
<div class="t" style="left:455.10px;top:596.88px;font-size:14px;font-weight:normal;font-style:italic;letter-spacing:0.5px;-webkit-text-stroke:0.45px #00ad4c;color:#00ad4c;transform:scaleX(0.8828)">45 $</div>
<div class="t" style="left:548.02px;top:596.98px;font-size:13.9px;font-weight:normal;font-style:normal;letter-spacing:1.5px;-webkit-text-stroke:0.9px #404040;color:#404040;transform:scaleX(0.9214)">81.1</div>
<div class="t" style="left:660.88px;top:596.88px;font-size:13.9px;font-weight:normal;font-style:normal;letter-spacing:0.9px;-webkit-text-stroke:0.35px #404040;color:#404040;transform:scaleX(0.9412)">66.3</div>
<div class="t" style="left:781.08px;top:596.88px;font-size:14px;font-weight:normal;font-style:italic;letter-spacing:0.5px;-webkit-text-stroke:0.45px #00ad4c;color:#00ad4c;transform:scaleX(0.8652)">15</div>
<div class="t" style="left:862.68px;top:596.88px;font-size:14px;font-weight:normal;font-style:italic;letter-spacing:0.5px;-webkit-text-stroke:0.45px #2e5fc1;color:#2e5fc1;transform:scaleX(0.9091)">237.0</div>
<div class="t" style="left:955.62px;top:596.88px;font-size:14px;font-weight:normal;font-style:italic;letter-spacing:0.5px;-webkit-text-stroke:0.45px #2e5fc1;color:#2e5fc1;transform:scaleX(0.9091)">86.2</div>
<div class="t" style="left:100.44px;top:617.35px;font-size:12.8px;font-weight:normal;font-style:normal;letter-spacing:0.9px;-webkit-text-stroke:0.75px #404040;color:#404040;transform:scaleX(0.8869)">JANV. 24</div>
<div class="t" style="left:259.71px;top:617.45px;font-size:13.9px;font-weight:normal;font-style:normal;letter-spacing:1.5px;-webkit-text-stroke:0.9px #404040;color:#404040;transform:scaleX(0.9214)">227.7</div>
<div class="t" style="left:354.55px;top:617.35px;font-size:13.9px;font-weight:normal;font-style:normal;letter-spacing:0.9px;-webkit-text-stroke:0.35px #404040;color:#404040;transform:scaleX(0.9412)">176.4</div>
<div class="t" style="left:455.10px;top:617.35px;font-size:14px;font-weight:normal;font-style:italic;letter-spacing:0.5px;-webkit-text-stroke:0.45px #00ad4c;color:#00ad4c;transform:scaleX(0.8828)">51 $</div>
<div class="t" style="left:548.02px;top:617.45px;font-size:13.9px;font-weight:normal;font-style:normal;letter-spacing:1.5px;-webkit-text-stroke:0.9px #404040;color:#404040;transform:scaleX(0.9214)">82.9</div>
<div class="t" style="left:660.41px;top:617.35px;font-size:13.9px;font-weight:normal;font-style:normal;letter-spacing:0.9px;-webkit-text-stroke:0.35px #404040;color:#404040;transform:scaleX(0.9412)">66.4</div>
<div class="t" style="left:781.08px;top:617.35px;font-size:14px;font-weight:normal;font-style:italic;letter-spacing:0.5px;-webkit-text-stroke:0.45px #00ad4c;color:#00ad4c;transform:scaleX(0.8652)">16</div>
<div class="t" style="left:862.68px;top:617.35px;font-size:14px;font-weight:normal;font-style:italic;letter-spacing:0.5px;-webkit-text-stroke:0.45px #2e5fc1;color:#2e5fc1;transform:scaleX(0.9091)">239.8</div>
<div class="t" style="left:955.62px;top:617.35px;font-size:14px;font-weight:normal;font-style:italic;letter-spacing:0.5px;-webkit-text-stroke:0.45px #2e5fc1;color:#2e5fc1;transform:scaleX(0.9091)">87.2</div>
<div class="t" style="left:98.66px;top:637.82px;font-size:12.8px;font-weight:normal;font-style:normal;letter-spacing:0.9px;-webkit-text-stroke:0.75px #404040;color:#404040;transform:scaleX(0.8869)">FÉVR. 24</div>
<div class="t" style="left:259.71px;top:637.92px;font-size:13.9px;font-weight:normal;font-style:normal;letter-spacing:1.5px;-webkit-text-stroke:0.9px #404040;color:#404040;transform:scaleX(0.9214)">232.8</div>
<div class="t" style="left:354.55px;top:637.82px;font-size:13.9px;font-weight:normal;font-style:normal;letter-spacing:0.9px;-webkit-text-stroke:0.35px #404040;color:#404040;transform:scaleX(0.9412)">187.1</div>
<div class="t" style="left:455.10px;top:637.82px;font-size:14px;font-weight:normal;font-style:italic;letter-spacing:0.5px;-webkit-text-stroke:0.45px #00ad4c;color:#00ad4c;transform:scaleX(0.8828)">46 $</div>
<div class="t" style="left:548.02px;top:637.92px;font-size:13.9px;font-weight:normal;font-style:normal;letter-spacing:1.5px;-webkit-text-stroke:0.9px #404040;color:#404040;transform:scaleX(0.9214)">84.8</div>
<div class="t" style="left:660.88px;top:637.82px;font-size:13.9px;font-weight:normal;font-style:normal;letter-spacing:0.9px;-webkit-text-stroke:0.35px #404040;color:#404040;transform:scaleX(0.9412)">70.3</div>
<div class="t" style="left:781.08px;top:637.82px;font-size:14px;font-weight:normal;font-style:italic;letter-spacing:0.5px;-webkit-text-stroke:0.45px #00ad4c;color:#00ad4c;transform:scaleX(0.8652)">14</div>
<div class="t" style="left:863.14px;top:637.82px;font-size:14px;font-weight:normal;font-style:italic;letter-spacing:0.5px;-webkit-text-stroke:0.45px #2e5fc1;color:#2e5fc1;transform:scaleX(0.9091)">244.1</div>
<div class="t" style="left:955.62px;top:637.82px;font-size:14px;font-weight:normal;font-style:italic;letter-spacing:0.5px;-webkit-text-stroke:0.45px #2e5fc1;color:#2e5fc1;transform:scaleX(0.9091)">88.9</div>
<div class="t" style="left:99.55px;top:658.29px;font-size:12.8px;font-weight:normal;font-style:normal;letter-spacing:0.9px;-webkit-text-stroke:0.75px #404040;color:#404040;transform:scaleX(0.8869)">MARS 24</div>
<div class="t" style="left:259.71px;top:658.39px;font-size:13.9px;font-weight:normal;font-style:normal;letter-spacing:1.5px;-webkit-text-stroke:0.9px #404040;color:#404040;transform:scaleX(0.9214)">237.9</div>
<div class="t" style="left:354.55px;top:658.29px;font-size:13.9px;font-weight:normal;font-style:normal;letter-spacing:0.9px;-webkit-text-stroke:0.35px #404040;color:#404040;transform:scaleX(0.9412)">207.0</div>
<div class="t" style="left:455.10px;top:658.29px;font-size:14px;font-weight:normal;font-style:italic;letter-spacing:0.5px;-webkit-text-stroke:0.45px #00ad4c;color:#00ad4c;transform:scaleX(0.8828)">31 $</div>
<div class="t" style="left:548.02px;top:658.39px;font-size:13.9px;font-weight:normal;font-style:normal;letter-spacing:1.5px;-webkit-text-stroke:0.9px #404040;color:#404040;transform:scaleX(0.9214)">86.7</div>
<div class="t" style="left:660.88px;top:658.29px;font-size:13.9px;font-weight:normal;font-style:normal;letter-spacing:0.9px;-webkit-text-stroke:0.35px #404040;color:#404040;transform:scaleX(0.9412)">77.1</div>
<div class="t" style="left:781.08px;top:658.29px;font-size:14px;font-weight:normal;font-style:italic;letter-spacing:0.5px;-webkit-text-stroke:0.45px #00ad4c;color:#00ad4c;transform:scaleX(0.8652)">10</div>
<div class="t" style="left:862.68px;top:658.29px;font-size:14px;font-weight:normal;font-style:italic;letter-spacing:0.5px;-webkit-text-stroke:0.45px #2e5fc1;color:#2e5fc1;transform:scaleX(0.9091)">248.4</div>
<div class="t" style="left:955.62px;top:658.29px;font-size:14px;font-weight:normal;font-style:italic;letter-spacing:0.5px;-webkit-text-stroke:0.45px #2e5fc1;color:#2e5fc1;transform:scaleX(0.9091)">90.5</div>
<div class="t" style="left:103.54px;top:678.76px;font-size:12.8px;font-weight:normal;font-style:normal;letter-spacing:0.9px;-webkit-text-stroke:0.75px #404040;color:#404040;transform:scaleX(0.8869)">AVR. 24</div>
<div class="t" style="left:259.71px;top:678.86px;font-size:13.9px;font-weight:normal;font-style:normal;letter-spacing:1.5px;-webkit-text-stroke:0.9px #404040;color:#404040;transform:scaleX(0.9214)">243.6</div>
<div class="t" style="left:354.55px;top:678.76px;font-size:13.9px;font-weight:normal;font-style:normal;letter-spacing:0.9px;-webkit-text-stroke:0.35px #404040;color:#404040;transform:scaleX(0.9412)">206.9</div>
<div class="t" style="left:455.10px;top:678.76px;font-size:14px;font-weight:normal;font-style:italic;letter-spacing:0.5px;-webkit-text-stroke:0.45px #00ad4c;color:#00ad4c;transform:scaleX(0.8828)">37 $</div>
<div class="t" style="left:548.02px;top:678.86px;font-size:13.9px;font-weight:normal;font-style:normal;letter-spacing:1.5px;-webkit-text-stroke:0.9px #404040;color:#404040;transform:scaleX(0.9214)">88.8</div>
<div class="t" style="left:660.41px;top:678.76px;font-size:13.9px;font-weight:normal;font-style:normal;letter-spacing:0.9px;-webkit-text-stroke:0.35px #404040;color:#404040;transform:scaleX(0.9412)">78.4</div>
<div class="t" style="left:781.08px;top:678.76px;font-size:14px;font-weight:normal;font-style:italic;letter-spacing:0.5px;-webkit-text-stroke:0.45px #00ad4c;color:#00ad4c;transform:scaleX(0.8652)">10</div>
<div class="t" style="left:863.14px;top:678.76px;font-size:14px;font-weight:normal;font-style:italic;letter-spacing:0.5px;-webkit-text-stroke:0.45px #2e5fc1;color:#2e5fc1;transform:scaleX(0.9091)">258.1</div>
<div class="t" style="left:956.07px;top:678.76px;font-size:14px;font-weight:normal;font-style:italic;letter-spacing:0.5px;-webkit-text-stroke:0.45px #2e5fc1;color:#2e5fc1;transform:scaleX(0.9091)">94.1</div>
<div class="t" style="left:106.20px;top:699.23px;font-size:12.8px;font-weight:normal;font-style:normal;letter-spacing:0.9px;-webkit-text-stroke:0.75px #404040;color:#404040;transform:scaleX(0.8869)">MAI 24</div>
<div class="t" style="left:259.71px;top:699.33px;font-size:13.9px;font-weight:normal;font-style:normal;letter-spacing:1.5px;-webkit-text-stroke:0.9px #404040;color:#404040;transform:scaleX(0.9214)">255.9</div>
<div class="t" style="left:354.55px;top:699.23px;font-size:13.9px;font-weight:normal;font-style:normal;letter-spacing:0.9px;-webkit-text-stroke:0.35px #404040;color:#404040;transform:scaleX(0.9412)">224.9</div>
<div class="t" style="left:455.10px;top:699.23px;font-size:14px;font-weight:normal;font-style:italic;letter-spacing:0.5px;-webkit-text-stroke:0.45px #00ad4c;color:#00ad4c;transform:scaleX(0.8828)">31 $</div>
<div class="t" style="left:547.56px;top:699.33px;font-size:13.9px;font-weight:normal;font-style:normal;letter-spacing:1.5px;-webkit-text-stroke:0.9px #404040;color:#404040;transform:scaleX(0.9214)">93.4</div>
<div class="t" style="left:661.35px;top:699.23px;font-size:13.9px;font-weight:normal;font-style:normal;letter-spacing:0.9px;-webkit-text-stroke:0.35px #404040;color:#404040;transform:scaleX(0.9412)">85.0</div>
<div class="t" style="left:784.54px;top:699.23px;font-size:14px;font-weight:normal;font-style:italic;letter-spacing:0.5px;-webkit-text-stroke:0.45px #00ad4c;color:#00ad4c;transform:scaleX(0.8652)">8</div>
<div class="t" style="left:862.68px;top:699.23px;font-size:14px;font-weight:normal;font-style:italic;letter-spacing:0.5px;-webkit-text-stroke:0.45px #2e5fc1;color:#2e5fc1;transform:scaleX(0.9091)">269.9</div>
<div class="t" style="left:955.62px;top:699.23px;font-size:14px;font-weight:normal;font-style:italic;letter-spacing:0.5px;-webkit-text-stroke:0.45px #2e5fc1;color:#2e5fc1;transform:scaleX(0.9091)">98.4</div>
<div class="t" style="left:103.54px;top:719.70px;font-size:12.8px;font-weight:normal;font-style:normal;letter-spacing:0.9px;-webkit-text-stroke:0.75px #404040;color:#404040;transform:scaleX(0.8869)">JUIN 24</div>
<div class="t" style="left:259.71px;top:719.80px;font-size:13.9px;font-weight:normal;font-style:normal;letter-spacing:1.5px;-webkit-text-stroke:0.9px #404040;color:#404040;transform:scaleX(0.9214)">262.0</div>
<div class="t" style="left:354.55px;top:719.70px;font-size:13.9px;font-weight:normal;font-style:normal;letter-spacing:0.9px;-webkit-text-stroke:0.35px #404040;color:#404040;transform:scaleX(0.9412)">228.8</div>
<div class="t" style="left:456.85px;top:720.70px;font-size:12.5px;font-weight:normal;font-style:italic;letter-spacing:0.5px;-webkit-text-stroke:0.45px #00ad4c;color:#00ad4c;transform:scaleX(0.8500)">33 $</div>
<div class="t" style="left:548.02px;top:719.80px;font-size:13.9px;font-weight:normal;font-style:normal;letter-spacing:1.5px;-webkit-text-stroke:0.9px #404040;color:#404040;transform:scaleX(0.9214)">95.6</div>
<div class="t" style="left:661.35px;top:719.70px;font-size:13.9px;font-weight:normal;font-style:normal;letter-spacing:0.9px;-webkit-text-stroke:0.35px #404040;color:#404040;transform:scaleX(0.9412)">87.1</div>
<div class="t" style="left:784.54px;top:719.70px;font-size:14px;font-weight:normal;font-style:italic;letter-spacing:0.5px;-webkit-text-stroke:0.45px #00ad4c;color:#00ad4c;transform:scaleX(0.8652)">9</div>
<div class="t" style="left:862.23px;top:719.70px;font-size:14px;font-weight:normal;font-style:italic;letter-spacing:0.5px;-webkit-text-stroke:0.45px #2e5fc1;color:#2e5fc1;transform:scaleX(0.9091)">280.7</div>
<div class="t" style="left:951.98px;top:719.70px;font-size:14px;font-weight:normal;font-style:italic;letter-spacing:0.5px;-webkit-text-stroke:0.45px #2e5fc1;color:#2e5fc1;transform:scaleX(0.9091)">102.3</div>
</body></html>
